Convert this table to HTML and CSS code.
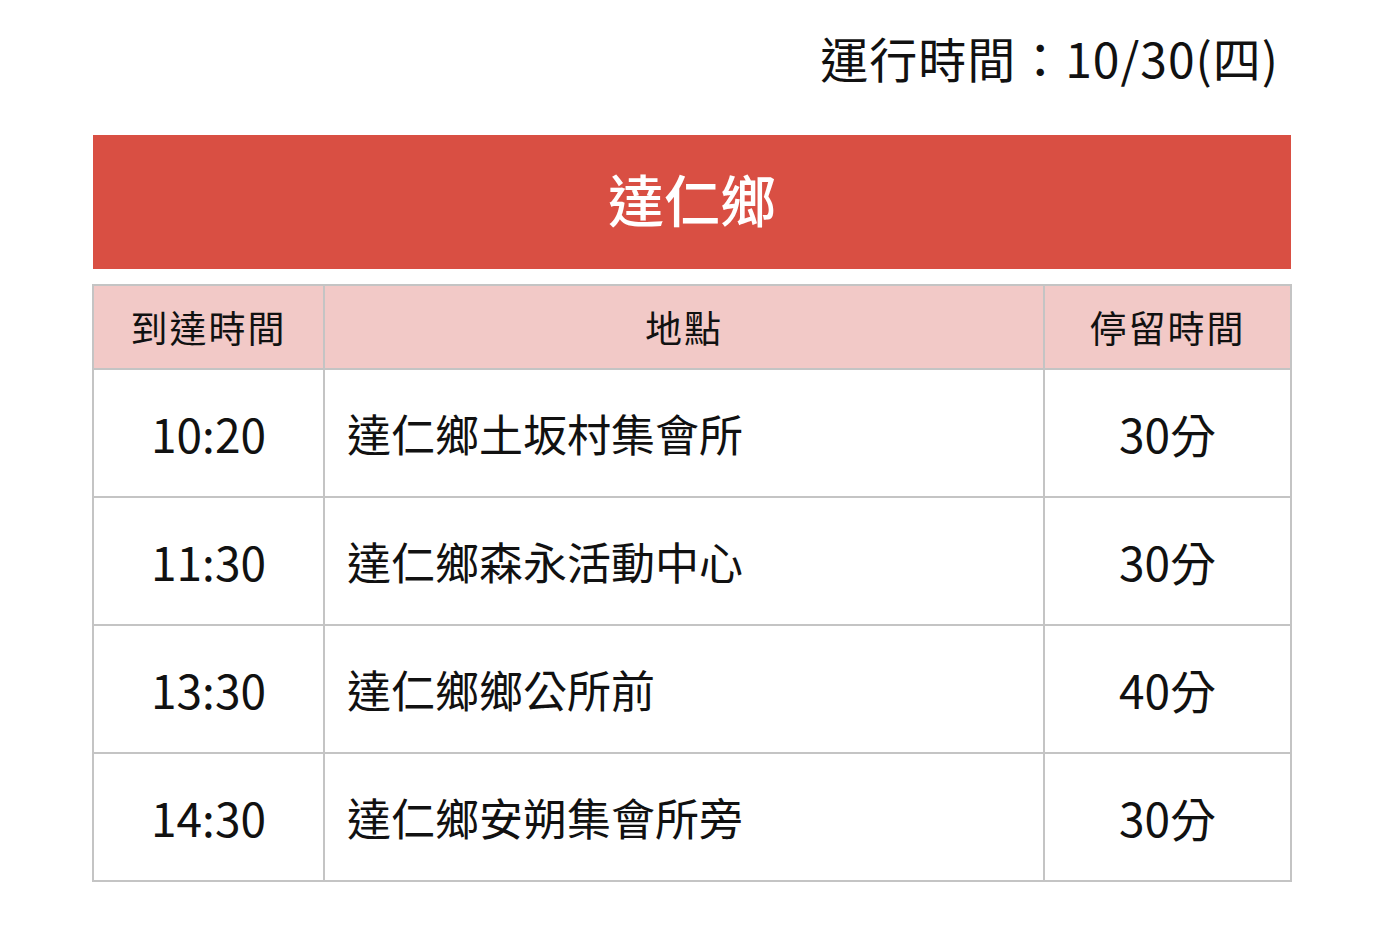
FILE: index.html
```html
<!DOCTYPE html>
<html lang="zh-Hant">
<head>
<meta charset="utf-8">
<link rel="stylesheet" href="styles.css">
</head>
<body>
<div class="page">
  <div class="run-date">運行時間：10/30(四)</div>
  <div class="banner">達仁鄉</div>
  <table class="schedule">
    <thead>
      <tr>
        <th class="c-time">到達時間</th>
        <th class="c-place">地點</th>
        <th class="c-stay">停留時間</th>
      </tr>
    </thead>
    <tbody>
      <tr><td class="c-time">10:20</td><td class="c-place">達仁鄉土坂村集會所</td><td class="c-stay">30分</td></tr>
      <tr><td class="c-time">11:30</td><td class="c-place">達仁鄉森永活動中心</td><td class="c-stay">30分</td></tr>
      <tr><td class="c-time">13:30</td><td class="c-place">達仁鄉鄉公所前</td><td class="c-stay">40分</td></tr>
      <tr><td class="c-time">14:30</td><td class="c-place">達仁鄉安朔集會所旁</td><td class="c-stay">30分</td></tr>
    </tbody>
  </table>
</div>
</body>
</html>
```

FILE: styles.css
```css
html, body {
  margin: 0;
  padding: 0;
  background: #ffffff;
}
body {
  font-family: "Noto Sans CJK TC", "Noto Sans", sans-serif;
  color: #111111;
}
.page {
  width: 1200px;
  margin-left: 92px;
  padding-top: 27px;
}
.run-date {
  text-align: right;
  font-size: 48px;
  line-height: 60px;
  letter-spacing: 1px;
  padding-right: 13px;
  margin-bottom: 48px;
}
.banner {
  background: #d94f43;
  color: #ffffff;
  height: 124px;
  padding-bottom: 10px;
  margin-left: 1px;
  margin-right: 1px;
  display: flex;
  align-items: center;
  justify-content: center;
  font-size: 56px;
  font-weight: 500;
  margin-bottom: 15px;
}
.schedule {
  width: 1200px;
  border-collapse: collapse;
  table-layout: fixed;
}
.schedule th, .schedule td {
  border: 2px solid #c4c4c4;
  text-align: center;
  padding: 0;
}
.schedule th {
  background: #f2c9c7;
  height: 82px;
  font-size: 37px;
  font-weight: 400;
  letter-spacing: 2px;
}
.schedule td {
  height: 126px;
  font-size: 46px;
}
.c-time { width: 229px; }
.c-stay { width: 245px; }
.schedule td.c-place {
  text-align: left;
  padding-left: 22px;
  font-size: 44px;
}
```
